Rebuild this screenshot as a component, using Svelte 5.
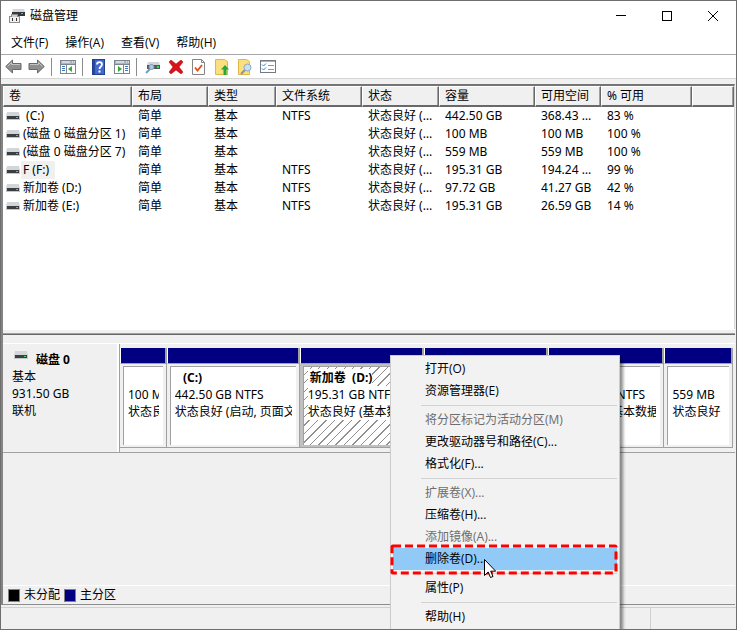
<script lang="ts">
  type Volume = {
    name: string;
    fs: string;
    capacity: string;
    free: string;
    percent: string;
    focused?: boolean;
  };

  const menus = ["文件(F)", "操作(A)", "查看(V)", "帮助(H)"];

  const columns = [
    { label: "卷", width: 129 },
    { label: "布局", width: 76 },
    { label: "类型", width: 68 },
    { label: "文件系统", width: 86 },
    { label: "状态", width: 77 },
    { label: "容量", width: 96 },
    { label: "可用空间", width: 66 },
    { label: "% 可用", width: 91 },
  ];

  const volumes: Volume[] = [
    { name: " (C:)", fs: "NTFS", capacity: "442.50 GB", free: "368.43 GB", percent: "83 %" },
    { name: "(磁盘 0 磁盘分区 1)", fs: "", capacity: "100 MB", free: "100 MB", percent: "100 %" },
    { name: "(磁盘 0 磁盘分区 7)", fs: "", capacity: "559 MB", free: "559 MB", percent: "100 %" },
    { name: "F (F:)", fs: "NTFS", capacity: "195.31 GB", free: "194.24 GB", percent: "99 %", focused: true },
    { name: "新加卷 (D:)", fs: "NTFS", capacity: "97.72 GB", free: "41.27 GB", percent: "42 %" },
    { name: "新加卷 (E:)", fs: "NTFS", capacity: "195.31 GB", free: "26.59 GB", percent: "14 %" },
  ];

  const partitions = [
    { name: "", size: "100 MB", status: "状态良好 (EFI 系统分区)", share: 46 },
    { name: "  (C:)", size: "442.50 GB NTFS", status: "状态良好 (启动, 页面文件, 故障转储, 基本数据分区)", share: 133 },
    { name: "新加卷  (D:)", size: "195.31 GB NTFS", status: "状态良好 (基本数据分区)", share: 124, selected: true },
    { name: "F  (F:)", size: "195.31 GB NTFS", status: "状态良好 (基本数据分区)", share: 124 },
    { name: "新加卷  (E:)", size: "195.31 GB NTFS", status: "状态良好 (基本数据分区)", share: 116 },
    { name: "", size: "559 MB", status: "状态良好", share: 68 },
  ];

  // null is a separator line
  const contextItems: ({ label: string; disabled?: boolean } | null)[] = [
    { label: "打开(O)" },
    { label: "资源管理器(E)" },
    null,
    { label: "将分区标记为活动分区(M)", disabled: true },
    { label: "更改驱动器号和路径(C)..." },
    { label: "格式化(F)..." },
    null,
    { label: "扩展卷(X)...", disabled: true },
    { label: "压缩卷(H)..." },
    { label: "添加镜像(A)...", disabled: true },
    { label: "删除卷(D)..." },
    null,
    { label: "属性(P)" },
    null,
    { label: "帮助(H)" },
  ];
  let active = $state("删除卷(D)...");
</script>

{#snippet drive()}
  <svg class="drive" width="14" height="9" viewBox="0 0 14 9" aria-hidden="true">
    <path d="M1 0h12l1 4H0z" fill="#d3d6d9" />
    <rect y="4" width="14" height="4" fill="#c4c7ca" />
    <rect x="1" y="4" width="12" height="3" fill="#3c3f41" />
    <rect x="10" y="5" width="2" height="1" fill="#2bea3b" />
  </svg>
{/snippet}

{#snippet panel(flip: boolean)}
  <svg width="16" height="14" viewBox="0 0 16 14" aria-hidden="true">
    <rect x=".5" y=".5" width="15" height="13" fill="#fff" stroke="#7d868f" />
    <path d="M1 1h14v3H1z" fill="#a8b4c0" />
    <path d="M2 2h8M12 2h1M14 2h1" stroke="#fff" />
    <path d="M1 4.5h14" stroke="#7d868f" />
    {#if flip}
      <path d="M9.5 5v8" stroke="#7d868f" />
      <path d="M11 6.5h3M11 8.5h3M11 10.5h3" stroke="#3f74b8" />
      <path d="M4 6l4 3-4 3z" fill="#35a835" />
    {:else}
      <path d="M6.5 5v8" stroke="#7d868f" />
      <path d="M2 6.5h3M2 8.5h3M2 10.5h3" stroke="#3f74b8" />
      <path d="M12 6L8 9l4 3z" fill="#35a835" />
    {/if}
  </svg>
{/snippet}

<div class="window">
  <header class="titlebar">
    <svg width="16" height="16" viewBox="0 0 16 16" aria-hidden="true">
      <path d="M4 1h11l1 3H3z" fill="#d5d7d9" />
      <rect x="3" y="4" width="13" height="4" fill="#34383a" />
      <rect x="12" y="5" width="2" height="1" fill="#2bea3b" />
      <path d="M0 8h2V6h7v2h2v7H0z" fill="#8b8e90" />
      <path d="M1 9h9v5H1z" fill="#f0f0f0" />
      <path d="M3 7h5v2H3z" fill="#c9cbcd" />
      <path d="M3 10h1v3H3zM7 10h1v3H7z" fill="#333" />
    </svg>
    <h1>磁盘管理</h1>
    <div class="captions">
      <button aria-label="最小化">
        <svg width="10" height="10" viewBox="0 0 10 10"><path d="M0 4.500h10" stroke="#000" /></svg>
      </button>
      <button aria-label="最大化">
        <svg width="10" height="10" viewBox="0 0 10 10"><rect x=".5" y=".5" width="9" height="9" fill="none" stroke="#000" /></svg>
      </button>
      <button aria-label="关闭">
        <svg width="10" height="10" viewBox="0 0 10 10"><path d="M0 0l10 10M10 0L0 10" stroke="#000" /></svg>
      </button>
    </div>
  </header>

  <nav class="menubar">
    {#each menus as m (m)}
      <button>{m}</button>
    {/each}
  </nav>

  <div class="toolbar">
    <button aria-label="后退">
      <svg width="17" height="15" viewBox="0 0 17 15"><path d="M.7 7.500L7.500 1v3.500h8.500v6H7.500V14z" fill="#8f8f8f" stroke="#6a6a6a" /><path d="M2.500 7.500L6.500 3.500v2h8.500" fill="none" stroke="#c4c4c4" /></svg>
    </button>
    <button aria-label="前进">
      <svg width="17" height="15" viewBox="0 0 17 15"><path d="M16.300 7.500L9.500 1v3.500H1v6h8.500V14z" fill="#8f8f8f" stroke="#6a6a6a" /><path d="M14.500 7.500l-4-4v2H2" fill="none" stroke="#c4c4c4" /></svg>
    </button>
    <span class="sep"></span>
    <button aria-label="显示/隐藏控制台树">{@render panel(false)}</button>
    <span class="sep"></span>
    <button aria-label="帮助">
      <svg width="13" height="16" viewBox="0 0 13 16">
        <rect x=".5" y=".5" width="12" height="15" fill="#4168cc" stroke="#233f8f" />
        <path d="M1 1h2v14H1z" fill="#25479f" />
        <path d="M5 5.500c0-3.200 5-3.200 5 0 0 2-2.500 2-2.500 4.500" fill="none" stroke="#fff" stroke-width="1.800" />
        <rect x="6.500" y="11.500" width="2" height="2" fill="#fff" />
      </svg>
    </button>
    <button aria-label="显示/隐藏操作窗格">{@render panel(true)}</button>
    <span class="sep"></span>
    <button aria-label="重新扫描磁盘">
      <svg width="15" height="14" viewBox="0 0 15 14">
        <path d="M3 2h11l1 3H2z" fill="#d3d6d9" />
        <rect x="2" y="5" width="13" height="4" fill="#55595c" />
        <rect x="12" y="6" width="2" height="2" fill="#2bea3b" />
        <path d="M1 13l4-4" stroke="#6f9cc4" stroke-width="2" />
        <circle cx="6.500" cy="7" r="2.500" fill="#a9cde8" stroke="#7f97ab" />
      </svg>
    </button>
    <button aria-label="删除">
      <svg width="14" height="14" viewBox="0 0 14 14"><path d="M2 0l5 4 5-4 2 2-4 5 4 5-2 2-5-4-5 4-2-2 4-5-4-5z" fill="#d9121b" stroke="#a00" stroke-width=".5" /></svg>
    </button>
    <button aria-label="标记">
      <svg width="13" height="16" viewBox="0 0 13 16"><path d="M.5.5h9l3 3v12H.5z" fill="#fff" stroke="#858585" /><path d="M9.500.5v3h3" fill="none" stroke="#858585" /><path d="M3 8.500l2.500 3L10 6" fill="none" stroke="#e64a19" stroke-width="1.800" /></svg>
    </button>
    <button aria-label="向上">
      <svg width="14" height="16" viewBox="0 0 14 16"><path d="M.5.5h9l3 2v13H.5z" fill="#fbdf7e" stroke="#dfb64a" /><path d="M10 6l4 4.500h-2.500V16h-3v-5.500H6z" fill="#27a737" /></svg>
    </button>
    <button aria-label="查找">
      <svg width="15" height="16" viewBox="0 0 15 16"><path d="M1.500.5h8l3 2v13h-11z" fill="#fbdf7e" stroke="#dfb64a" /><path d="M4 15l4-4" stroke="#7c97b5" stroke-width="2" /><circle cx="10.500" cy="8.500" r="3.500" fill="#c5e1f2" stroke="#8fa9bd" /></svg>
    </button>
    <button aria-label="属性列表">
      <svg width="16" height="13" viewBox="0 0 16 13"><rect x=".5" y=".5" width="15" height="12" fill="#fff" stroke="#727a83" /><path d="M1 1.500h14" stroke="#a9b2bb" /><path d="M2 4.500l1.500 1.500L6 3.500M2 8.500l1.500 1.500L6 7.500" fill="none" stroke="#2f7fd0" /><path d="M8 5.500h6M8 9.500h6" stroke="#8d959d" /></svg>
    </button>
  </div>

  <section class="volumes">
    <table>
      <colgroup>
        {#each columns as c (c.label)}
          <col style:width="{c.width}px" />
        {/each}
        <col />
      </colgroup>
      <thead>
        <tr>
          {#each columns as c (c.label)}
            <th scope="col">{c.label}</th>
          {/each}
          <th></th>
        </tr>
      </thead>
      <tbody>
        {#each volumes as v (v.name)}
          <tr>
            <td class="vol">
              <div>{@render drive()}<span class:focused={v.focused}>{v.name}</span></div>
            </td>
            <td>简单</td>
            <td>基本</td>
            <td>{v.fs}</td>
            <td>状态良好 (基本数据分区)</td>
            <td>{v.capacity}</td>
            <td>{v.free}</td>
            <td>{v.percent}</td>
            <td></td>
          </tr>
        {/each}
      </tbody>
    </table>
  </section>

  <section class="graph">
    <div class="disk">
      <div class="info">
        <strong>{@render drive()}磁盘 0</strong>
        <span>基本</span>
        <span>931.50 GB</span>
        <span>联机</span>
      </div>
      <div class="parts">
        {#each partitions as p}
          <div class="part" class:selected={p.selected} style:flex-grow={p.share}>
            <div class="bar"></div>
            <div class="frame">
              <div class="box">
                <div class="clip">
                  <p><b>{p.name}</b></p>
                  <p><span>{p.size}</span></p>
                  <p><span>{p.status}</span></p>
                </div>
              </div>
            </div>
          </div>
        {/each}
      </div>
    </div>
    <div class="legend">
      <i class="swatch free"></i><span>未分配</span>
      <i class="swatch primary"></i><span>主分区</span>
    </div>
  </section>

  <footer class="status"><span></span><span></span></footer>

  <div class="context" role="menu">
    {#each contextItems as item}
      {#if item}
        <button
          role="menuitem"
          class:active={item.label === active}
          disabled={item.disabled}
          onmouseenter={() => (active = item.label)}
        >
          {item.label}
          {#if item.label === "删除卷(D)..."}
            <svg class="ring" aria-hidden="true">
              <rect x="2" y="2" rx="1" fill="none" stroke="#f00" stroke-width="3" stroke-dasharray="8 4" />
            </svg>
            <svg class="cursor" width="12" height="19" viewBox="0 0 12 19" aria-hidden="true">
              <path d="M.5.5v16l3.700-3.500 2.300 5.500 2.500-1-2.300-5.300h5z" fill="#fff" stroke="#000" />
            </svg>
          {/if}
        </button>
      {:else}
        <hr />
      {/if}
    {/each}
  </div>
</div>

<style>
  :global(body) {
    margin: 0;
  }
  .window {
    position: relative;
    display: flex;
    flex-direction: column;
    box-sizing: border-box;
    height: 100vh;
    overflow: hidden;
    border: 1px solid #6e6e6e;
    background: #f0f0f0;
    color: #000;
    font: 12px/18px "Noto Sans", "Noto Sans CJK SC", sans-serif;
  }
  button {
    padding: 0;
    border: 0;
    background: none;
    color: inherit;
    font: inherit;
  }
  svg {
    display: block;
    flex: none;
  }

  .titlebar {
    display: flex;
    align-items: center;
    height: 30px;
    padding-left: 8px;
    background: #fff;
  }
  h1 {
    margin: 0 0 0 5px;
    font-size: 12px;
    font-weight: 400;
  }
  .captions {
    display: flex;
    margin-left: auto;
  }
  .captions button {
    display: grid;
    place-items: center;
    width: 46px;
    height: 28px;
  }

  .menubar {
    display: flex;
    gap: 17px;
    height: 23px;
    padding-left: 10px;
    background: #fff;
    border-bottom: 1px solid #a8a8a8;
    font-family: "Open Sans", "Noto Sans CJK SC", sans-serif;
  }

  .toolbar {
    display: flex;
    align-items: center;
    height: 23px;
    padding-left: 1px;
    background: #fff;
    border-bottom: 1px solid #d5d5d5;
  }
  .toolbar button {
    display: grid;
    place-items: center;
    width: 23px;
    height: 22px;
  }
  .sep {
    width: 1px;
    height: 18px;
    margin: 0 4px 0 3px;
    background: #8c8c8c;
  }

  .volumes {
    height: 243px;
    margin: 5px 1px 0 0;
    background: #fff;
    border-top: 2px solid #747474;
    border-left: 2px solid #848484;
    border-right: 1px solid #d8d8d8;
    overflow: hidden;
  }
  table {
    width: 100%;
    table-layout: fixed;
    border-collapse: separate;
    border-spacing: 0;
  }
  th,
  td {
    box-sizing: border-box;
    height: 18px;
    padding: 0 4px 0 6px;
    font-weight: 400;
    text-align: left;
    white-space: nowrap;
    overflow: hidden;
    text-overflow: ellipsis;
  }
  th {
    height: 21px;
    padding-left: 5px;
    background: #f0f0f0;
    border-style: solid;
    border-width: 1px 1px 2px 1px;
    border-color: #fff #696969 #696969 #fff;
    box-shadow: inset -1px 0 #a0a0a0;
  }
  td.vol {
    padding: 0 0 0 3px;
    text-overflow: clip;
  }
  .vol div {
    display: flex;
    align-items: center;
    gap: 1px;
  }
  .vol span {
    padding: 0 2px;
    white-space: pre;
  }
  .vol .focused {
    padding-right: 6px;
    background: #f0f0f0;
  }

  .graph {
    display: flex;
    flex-direction: column;
    flex: 1;
    min-height: 0;
    margin-right: 1px;
    padding-top: 8px;
    border-left: 2px solid #848484;
    border-bottom: 1px solid #8c8c8c;
    box-shadow:
      inset 0 1px #fff,
      inset 0 4px #f0f0f0,
      inset 0 5px #a0a0a0,
      inset 0 6px #696969;
  }
  .disk {
    display: flex;
    margin-top: 6px;
    border-top: 1px solid #fff;
    border-bottom: 1px solid #a0a0a0;
  }
  .info {
    display: flex;
    flex-direction: column;
    box-sizing: border-box;
    width: 117px;
    padding: 7px 0 0 9px;
    border-right: 1px solid #a0a0a0;
    box-shadow: inset -2px 0 #fff;
    line-height: 17px;
  }
  .info strong {
    display: flex;
    gap: 8px;
    padding-left: 2px;
  }
  .parts {
    display: flex;
    flex: 1;
    min-width: 0;
    padding: 4px 2px 4px 0;
  }
  .part {
    flex-basis: 0;
    min-width: 0;
    border-right: 1px solid #a0a0a0;
  }
  .bar {
    height: 15px;
    background: #000080;
    border-left: 1px solid #fff;
    border-right: 1px solid #a0a0a0;
    border-bottom: 1px solid #a0a0a0;
  }
  .frame {
    padding: 2px 3px;
    border-bottom: 1px solid #a0a0a0;
  }
  .box {
    box-sizing: border-box;
    height: 79px;
    padding: 2px 4px 0 4px;
    background: #fff;
    border-top: 1px solid #a0a0a0;
    border-left: 1px solid #a0a0a0;
  }
  .clip {
    overflow: hidden;
  }
  .clip p {
    height: 17px;
    margin: 0;
    line-height: 17px;
    white-space: pre;
  }
  .clip b {
    padding-left: 2px;
  }
  .selected .frame {
    background: #c0c0c0;
  }
  .selected .box {
    background: #fff repeating-linear-gradient(135deg, #fff 0 5px, #909090 5px 6px);
  }
  .selected b,
  .selected span {
    display: inline-block;
    background: #fff;
  }

  .legend {
    display: flex;
    align-items: center;
    gap: 4px;
    height: 18px;
    margin-top: auto;
    padding-left: 5px;
    border-top: 1px solid #fff;
  }
  .swatch {
    width: 10px;
    height: 11px;
    border: 1px solid #808080;
  }
  .free {
    background: #000;
  }
  .primary {
    background: #000080;
  }

  .status {
    display: flex;
    justify-content: flex-end;
    height: 21px;
    margin-top: 2px;
    border-top: 1px solid #d0d0d0;
  }
  .status span {
    width: 85px;
    border-left: 1px solid #d0d0d0;
  }

  .context {
    position: absolute;
    top: 354px;
    left: 389px;
    width: 224px;
    padding: 2px;
    background: #f2f2f2;
    border: 1px solid #ccc;
    box-shadow: 3px 3px 3px rgba(0, 0, 0, 0.45);
    font-family: "Open Sans", "Noto Sans CJK SC", sans-serif;
  }
  .context button {
    position: relative;
    display: block;
    width: 100%;
    height: 22px;
    padding-left: 32px;
    text-align: left;
  }
  .context button:disabled {
    color: #6d6d6d;
  }
  .context .active {
    background: #91c9f7;
  }
  .context hr {
    height: 1px;
    margin: 3px 0 3px 28px;
    border: 0;
    background: #d2d2d2;
  }
  .ring {
    position: absolute;
    top: -4px;
    left: -3px;
    width: calc(100% + 4px);
    height: 31px;
  }
  .ring rect {
    width: calc(100% - 4px);
    height: 27px;
  }
  .cursor {
    position: absolute;
    top: 11px;
    left: 91px;
  }
</style>
